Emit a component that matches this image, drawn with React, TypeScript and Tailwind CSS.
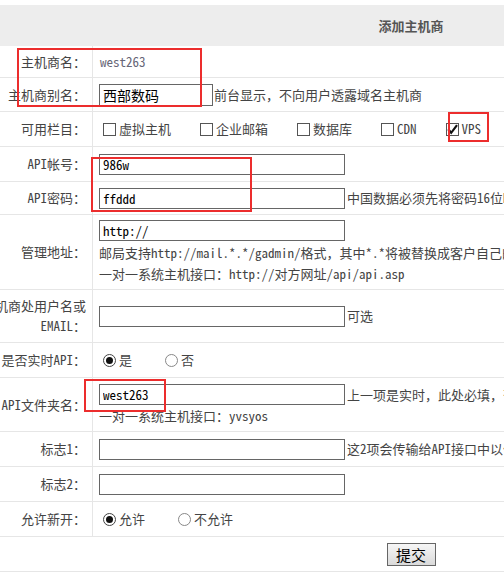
import React from "react";

const font = "font-['Noto_Sans_Mono_CJK_SC','Noto_Sans_CJK_SC',monospace]";

function Row({
  label,
  h,
  children,
}: {
  label: React.ReactNode;
  h: string;
  children: React.ReactNode;
}) {
  return (
    <div className={`flex border-b border-[#e6e6e6] ${h}`}>
      <div className="w-[93px] shrink-0 border-r border-[#e6e6e6] flex items-center justify-end pr-[6px] text-[#444] whitespace-nowrap">
        {label}
      </div>
      <div className="flex-1 flex items-center pl-[6px] text-[#444] whitespace-nowrap">
        {children}
      </div>
    </div>
  );
}

function Box({ checked }: { checked?: boolean }) {
  return (
    <span className="ml-[4px] mr-[3px] w-[13px] h-[13px] shrink-0 border border-[#555] bg-white inline-flex items-center justify-center">
      {checked && (
        <svg width="11" height="11" viewBox="0 0 11 11">
          <path d="M1.2 5.2 L4.2 8.8 L10 1.2" fill="none" stroke="#111" strokeWidth="2.2" />
        </svg>
      )}
    </span>
  );
}

function Radio({ checked }: { checked?: boolean }) {
  return (
    <span
      className={`ml-[4px] mr-[3px] w-[13px] h-[13px] shrink-0 rounded-full border bg-white inline-flex items-center justify-center ${
        checked ? "border-[#444]" : "border-[#888]"
      }`}
    >
      {checked && <span className="w-[7px] h-[7px] rounded-full bg-[#111]" />}
    </span>
  );
}

function Field({ value, w = "w-[246px]", h = "h-[21px]", big }: { value?: string; w?: string; h?: string; big?: boolean }) {
  return (
    <input
      readOnly
      defaultValue={value}
      className={`${w} ${h} shrink-0 border border-[#666] bg-white pl-[3px] text-black outline-none ${
        big ? "text-[14px]" : "text-[13px]"
      } ${font}`}
    />
  );
}

export default function App() {
  return (
    <div className={`w-[504px] h-[579px] overflow-hidden bg-white text-[13px] ${font}`}>
      <div className="relative w-[822px] pt-[5px]">
        <div className="h-[41px] bg-[#ededed] flex items-center justify-center font-bold text-[#555]">
          添加主机商
        </div>

        <Row label="主机商名：" h="h-[32px]">
          <span className="pl-[1px] text-[#667]">west263</span>
        </Row>

        <Row label="主机商别名：" h="h-[34px]">
          <Field value="西部数码" w="w-[114px]" h="h-[22px]" big />
          <span className="ml-[1px]">前台显示，不向用户透露域名主机商</span>
        </Row>

        <Row label="可用栏目：" h="h-[35px]">
          <label className="flex items-center mr-[25px]">
            <Box />
            虚拟主机
          </label>
          <label className="flex items-center mr-[25px]">
            <Box />
            企业邮箱
          </label>
          <label className="flex items-center mr-[25px]">
            <Box />
            数据库
          </label>
          <label className="flex items-center mr-[25px]">
            <Box />
            CDN
          </label>
          <label className="flex items-center">
            <Box checked />
            VPS
          </label>
        </Row>

        <Row label="API帐号：" h="h-[35px]">
          <Field value="986w" />
        </Row>

        <Row label="API密码：" h="h-[33px]">
          <Field value="ffddd" />
          <span className="ml-[2px]">中国数据必须先将密码16位MD5加密后再填写</span>
        </Row>

        <Row label="管理地址：" h="h-[75px]">
          <div className="flex flex-col leading-[21px]">
            <Field value="http://" />
            <span className="mt-[1px]">邮局支持http://mail.*.*/gadmin/格式，其中*.*将被替换成客户自己的域名</span>
            <span>一对一系统主机接口：http://对方网址/api/api.asp</span>
          </div>
        </Row>

        <Row
          label={
            <div className="text-right leading-[20px]">
              <div>主机商处用户名或</div>
              <div>EMAIL：</div>
            </div>
          }
          h="h-[53px]"
        >
          <Field />
          <span className="ml-[2px]">可选</span>
        </Row>

        <Row label="是否实时API：" h="h-[35px]">
          <label className="flex items-center mr-[29px]">
            <Radio checked />是
          </label>
          <label className="flex items-center">
            <Radio />否
          </label>
        </Row>

        <Row label="API文件夹名：" h="h-[54px]">
          <div className="flex flex-col leading-[21px]">
            <div className="flex items-center">
              <Field value="west263" />
              <span className="ml-[2px]">上一项是实时，此处必填，否则可以不填</span>
            </div>
            <span>一对一系统主机接口：yvsyos</span>
          </div>
        </Row>

        <Row label="标志1：" h="h-[35px]">
          <Field />
          <span className="ml-[2px]">这2项会传输给API接口中以便识别来源</span>
        </Row>

        <Row label="标志2：" h="h-[35px]">
          <Field />
        </Row>

        <Row label="允许新开：" h="h-[35px]">
          <label className="flex items-center mr-[29px]">
            <Radio checked />允许
          </label>
          <label className="flex items-center">
            <Radio />不允许
          </label>
        </Row>

        <div className="h-[35px] border-b border-[#e6e6e6] flex items-center justify-center">
          <button className="w-[49px] h-[23px] border border-[#666] bg-gradient-to-b from-[#f6f6f6] to-[#dadada] text-[15px] text-black leading-none">
            提交
          </button>
        </div>

        <div className="absolute left-[17px] top-[48px] w-[185px] h-[59px] border-2 border-[#ec2d2d]" />
        <div className="absolute left-[448px] top-[112px] w-[41px] h-[30px] border-2 border-[#ec2d2d]" />
        <div className="absolute left-[91px] top-[157px] w-[161px] h-[55px] border-2 border-[#ec2d2d]" />
        <div className="absolute left-[84px] top-[379px] w-[82px] h-[33px] border-2 border-[#ec2d2d]" />
      </div>
    </div>
  );
}
